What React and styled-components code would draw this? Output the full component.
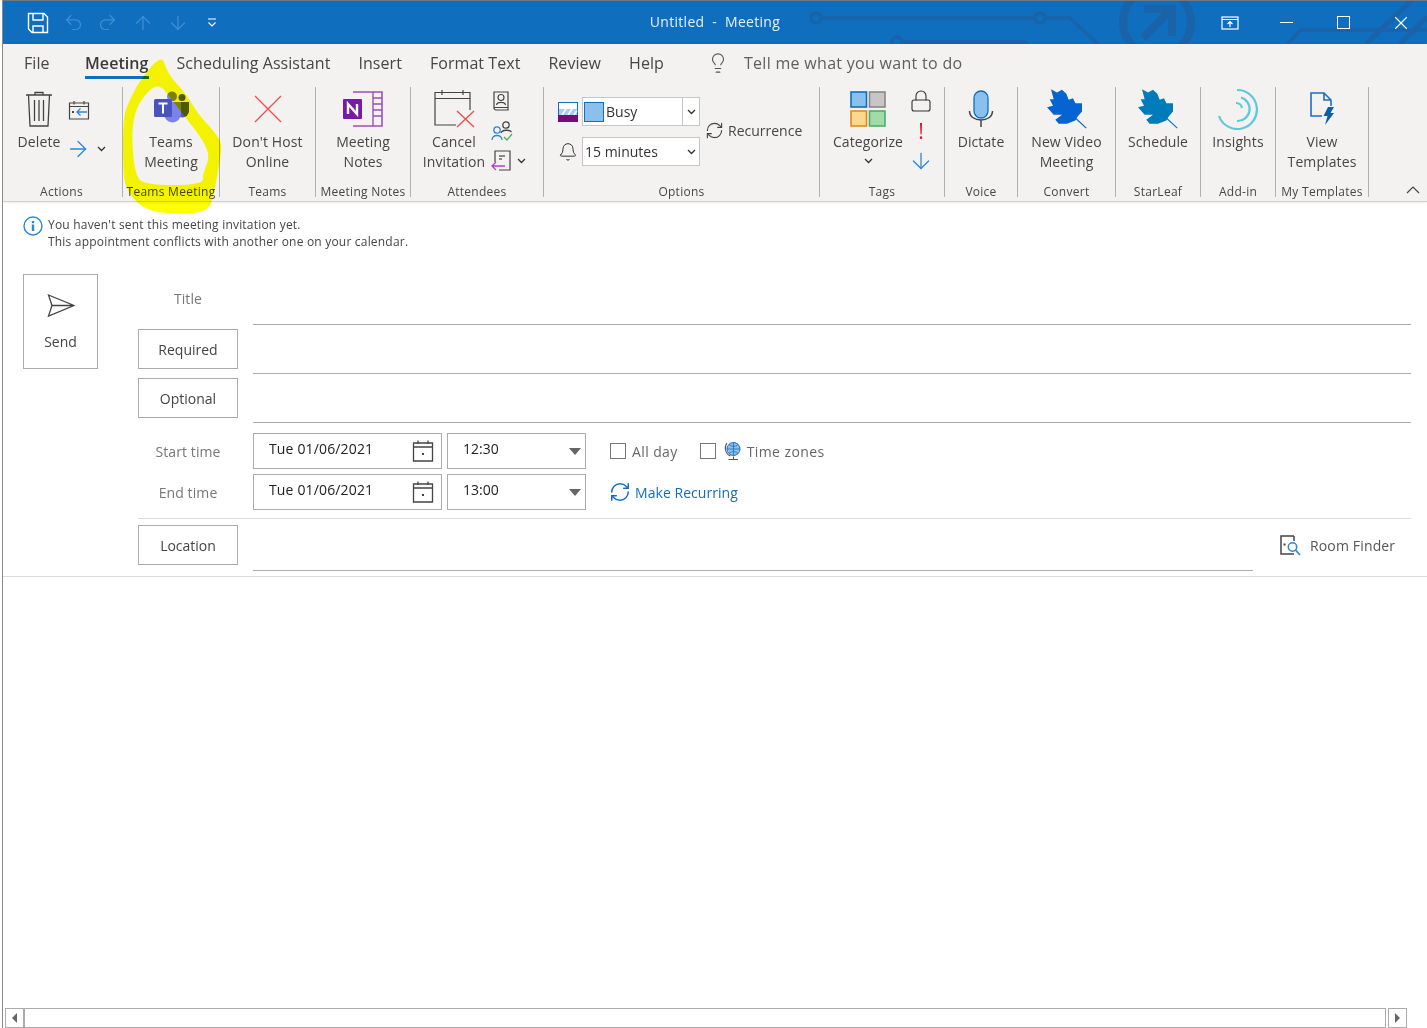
import styled, { createGlobalStyle } from "styled-components";
import { ArrowDown, ArrowRight, ArrowUp, Bell, Lightbulb, Lock, Redo2, RefreshCw, Undo2, X } from "lucide-react";

const BLUE = "#106ebe";
const UI_FONT = `"Open Sans", "Noto Sans", sans-serif`;

const GlobalStyle = createGlobalStyle`
  html, body {
    margin: 0;
    padding: 0;
    background: #fff;
  }
  body {
    font-family: ${UI_FONT};
    overflow: hidden;
  }
`;

const smooth = (pts) => {
  const mid = (a, b) => [(a[0] + b[0]) / 2, (a[1] + b[1]) / 2];
  const start = mid(pts[pts.length - 1], pts[0]);
  let d = `M${start[0]} ${start[1]}`;
  pts.forEach((p, i) => {
    const m = mid(p, pts[(i + 1) % pts.length]);
    d += `Q${p[0]} ${p[1]} ${m[0]} ${m[1]}`;
  });
  return d + "Z";
};

const outerMark = [[162,54],[167,73],[187,95],[197,113],[213,130],[222,143],[220,160],[214,193],[208,213],[163,214],[140,207],[125,187],[123,167],[123,120],[128,103],[140,80]];
const innerMark = [[158,82],[140,100],[133,120],[132,143],[135,173],[143,185],[203,185],[203,173],[210,157],[203,140],[186,118],[172,100]];

function App() {
  return (
    <Page>
      <GlobalStyle />
      <TopEdge />
      <TitleBar>
        <Watermark width="1427" height="44" viewBox="0 0 1427 44" fill="none" stroke="#1a63a8">
          <g strokeWidth="3.5">
            <circle cx="816" cy="18" r="5" />
            <path d="M821 18H1035M1045 18H1070L1098 44" />
            <circle cx="1040" cy="18" r="5" />
            <circle cx="897" cy="42" r="5" />
            <path d="M902 42H1025L1030 46" />
            <path d="M1287 44L1301 30H1427" />
          </g>
          <g strokeWidth="8">
            <circle cx="1157" cy="22" r="34" />
            <path d="M1143 38L1170 11M1144 9H1172V36" />
            <path d="M1366 44L1412 0M1400 44L1427 17" strokeWidth="5" />
          </g>
        </Watermark>
        <Qat>
          <SaveIcon />
          <DimIcon><Undo2 size={21} strokeWidth={1.4} /></DimIcon>
          <DimIcon><Redo2 size={21} strokeWidth={1.4} /></DimIcon>
          <DimIcon><ArrowUp size={22} strokeWidth={1.4} /></DimIcon>
          <DimIcon><ArrowDown size={22} strokeWidth={1.4} /></DimIcon>
          <CustomizeIcon />
        </Qat>
        <WindowTitle>{"Untitled  -  Meeting"}</WindowTitle>
        <WinControls>
          <RibbonDisplayIcon />
          <WinButton><MinLine /></WinButton>
          <WinButton><MaxBox /></WinButton>
          <WinButton><X size={22} strokeWidth={1.2} color="#fff" /></WinButton>
        </WinControls>
      </TitleBar>

      <Ribbon>
        <TabRow>
          <Tab $first>File</Tab>
          <Tab $active>Meeting</Tab>
          <Tab>Scheduling Assistant</Tab>
          <Tab>Insert</Tab>
          <Tab>Format Text</Tab>
          <Tab>Review</Tab>
          <Tab>Help</Tab>
          <TellMe>
            <Lightbulb size={22} strokeWidth={1.2} color="#555" />
            <span>Tell me what you want to do</span>
          </TellMe>
        </TabRow>

        <Groups>
          <Group width={120} label="Actions" labelShift={-1}>
            <ActionsBody>
              <BigButton $width={50}>
                <IconSlot><TrashIcon /></IconSlot>
                Delete
              </BigButton>
              <ActionsSide>
                <CalendarBackIcon />
                <ForwardRow $gap={6} $shift={-3}>
                  <ArrowRight size={26} strokeWidth={1.2} color="#2b88d8" />
                  <Chevron />
                </ForwardRow>
              </ActionsSide>
            </ActionsBody>
          </Group>
          <Group width={97} label="Teams Meeting">
            <BigButton>
              <IconSlot><TeamsIcon /></IconSlot>
              Teams
              <br />
              Meeting
            </BigButton>
          </Group>
          <Group width={96} label="Teams">
            <BigButton>
              <IconSlot><CrossIcon size={32} /></IconSlot>
              Don't Host
              <br />
              Online
            </BigButton>
          </Group>
          <Group width={95} label="Meeting Notes">
            <BigButton>
              <IconSlot><OneNoteIcon /></IconSlot>
              Meeting
              <br />
              Notes
            </BigButton>
          </Group>
          <Group width={133} label="Attendees">
            <AttendeesBody>
              <BigButton $width={66}>
                <IconSlot><CancelInviteIcon /></IconSlot>
                Cancel
                <br />
                Invitation
              </BigButton>
              <SideIcons>
                <AddressIcon />
                <PeopleCheckIcon />
                <ForwardRow $gap={6}>
                  <ResponseIcon />
                  <Chevron />
                </ForwardRow>
              </SideIcons>
            </AttendeesBody>
          </Group>
          <Group width={276} label="Options">
            <OptionsBody>
              <OptionRows>
                <OptionRow>
                  <BusyIcon />
                  <RibbonSelect>
                    <Swatch />
                    <SelectText>Busy</SelectText>
                    <SelectDrop $divided><Chevron /></SelectDrop>
                  </RibbonSelect>
                </OptionRow>
                <OptionRow>
                  <BellSlot><Bell size={26} strokeWidth={1.2} color="#333" /></BellSlot>
                  <RibbonSelect>
                    <SelectText>15 minutes</SelectText>
                    <SelectDrop><Chevron /></SelectDrop>
                  </RibbonSelect>
                </OptionRow>
              </OptionRows>
              <Recurrence>
                <RefreshCw size={19} strokeWidth={1.4} color="#444" />
                Recurrence
              </Recurrence>
            </OptionsBody>
          </Group>
          <Group width={125} label="Tags">
            <TagsBody>
              <BigButton $width={78}>
                <IconSlot><CategorizeIcon /></IconSlot>
                Categorize
                <ChevronLine><Chevron /></ChevronLine>
              </BigButton>
              <TagIcons>
                <Lock size={24} strokeWidth={1.1} color="#333" />
                <Urgent>!</Urgent>
                <ArrowDown size={26} strokeWidth={1.2} color="#2b88d8" />
              </TagIcons>
            </TagsBody>
          </Group>
          <Group width={73} label="Voice">
            <BigButton>
              <IconSlot><MicIcon /></IconSlot>
              Dictate
            </BigButton>
          </Group>
          <Group width={98} label="Convert">
            <BigButton>
              <IconSlot><LeafIcon color="#0564d2" /></IconSlot>
              New Video
              <br />
              Meeting
            </BigButton>
          </Group>
          <Group width={85} label="StarLeaf">
            <BigButton>
              <IconSlot><LeafIcon color="#007cba" /></IconSlot>
              Schedule
            </BigButton>
          </Group>
          <Group width={75} label="Add-in">
            <BigButton>
              <IconSlot><InsightsIcon /></IconSlot>
              Insights
            </BigButton>
          </Group>
          <Group width={93} label="My Templates">
            <BigButton>
              <IconSlot><TemplatesIcon /></IconSlot>
              View
              <br />
              Templates
            </BigButton>
          </Group>
          <Collapse>
            <svg width="14" height="8" viewBox="0 0 14 8" fill="none" stroke="#444" strokeWidth="1.2">
              <path d="M1 7L7 1L13 7" />
            </svg>
          </Collapse>
        </Groups>
      </Ribbon>

      <Notice>
        <InfoIcon />
        <div>
          <div>You haven't sent this meeting invitation yet.</div>
          <div>This appointment conflicts with another one on your calendar.</div>
        </div>
      </Notice>

      <Form>
        <SendButton>
          <SendIcon />
          Send
        </SendButton>
        <Fields>
          <TitleRow>
            <FieldLabel>Title</FieldLabel>
            <Line />
          </TitleRow>
          <AddressRow>
            <FieldButton>Required</FieldButton>
            <Line />
          </AddressRow>
          <AddressRow>
            <FieldButton>Optional</FieldButton>
            <Line />
          </AddressRow>
          <TimeRows>
            <TimeRow>
              <FieldLabel>Start time</FieldLabel>
              <DateBox>
                Tue 01/06/2021
                <CalendarSlot><CalendarIcon /></CalendarSlot>
              </DateBox>
              <TimeBox>
                12:30
                <Caret />
              </TimeBox>
              <Extras>
                <Check />
                <CheckLabel>All day</CheckLabel>
                <Check $gap />
                <GlobeIcon />
                <CheckLabel>Time zones</CheckLabel>
              </Extras>
            </TimeRow>
            <TimeRow>
              <FieldLabel>End time</FieldLabel>
              <DateBox>
                Tue 01/06/2021
                <CalendarSlot><CalendarIcon /></CalendarSlot>
              </DateBox>
              <TimeBox>
                13:00
                <Caret />
              </TimeBox>
              <Extras>
                <RefreshCw size={22} strokeWidth={1.6} color={BLUE} />
                <RecurringLink>Make Recurring</RecurringLink>
              </Extras>
            </TimeRow>
          </TimeRows>
          <LocationRow>
            <FieldButton>Location</FieldButton>
            <LocationLine />
            <RoomFinder>
              <RoomFinderIcon />
              Room Finder
            </RoomFinder>
          </LocationRow>
        </Fields>
      </Form>

      <ScrollBar>
        <ScrollButton $left><ScrollArrow $left /></ScrollButton>
        <ScrollTrack />
        <ScrollButton><ScrollArrow /></ScrollButton>
      </ScrollBar>

      <Highlight width="1427" height="230" viewBox="0 0 1427 230">
        <path d={smooth(outerMark) + smooth(innerMark)} fill="#ffff00" fillRule="evenodd" />
      </Highlight>
    </Page>
  );
}

export default App;

function Group({ width, label, labelShift = 0, children }) {
  return (
    <GroupBox $width={width}>
      <GroupBody>{children}</GroupBody>
      <GroupLabel $shift={labelShift}>{label}</GroupLabel>
    </GroupBox>
  );
}

function Chevron() {
  return (
    <svg width="9" height="6" viewBox="0 0 9 6" fill="none" stroke="#333" strokeWidth="1.3">
      <path d="M1 1L4.5 4.5L8 1" />
    </svg>
  );
}

function SaveIcon() {
  return (
    <svg width="22" height="22" viewBox="0 0 22 22" fill="none" stroke="#fff" strokeWidth="1.4">
      <path d="M1.5 1.5H17L20.5 5V20.5H5L1.5 17Z" />
      <path d="M6 1.5V8H16V1.5M6 20.5V14H16V20.5" />
    </svg>
  );
}

function CustomizeIcon() {
  return (
    <CustomizeSvg width="12" height="12" viewBox="0 0 12 12" fill="none" stroke="#fff" strokeWidth="1.2">
      <path d="M2 2H10M2.5 5.5L6 9L9.5 5.5" />
    </CustomizeSvg>
  );
}

function RibbonDisplayIcon() {
  return (
    <WinButton>
      <svg width="18" height="14" viewBox="0 0 18 14" fill="none" stroke="#fff" strokeWidth="1.2">
        <rect x="1" y="1" width="16" height="12" />
        <path d="M1 3.5H17M9 11V5.5M6.5 8L9 5.5L11.5 8" />
      </svg>
    </WinButton>
  );
}

function TrashIcon() {
  return (
    <svg width="28" height="38" viewBox="0 0 28 38" fill="none" stroke="#444" strokeWidth="1.3">
      <path d="M1 5H27M10 5V2.5H18V5M3.5 5L5 36H23L24.5 5" />
      <path d="M9.5 10V31M14 10V31M18.5 10V31" />
    </svg>
  );
}

function CalendarBackIcon() {
  return (
    <svg width="22" height="20" viewBox="0 0 22 20" fill="none">
      <path d="M1.5 3H20.5V19H1.5ZM1.5 6.5H20.5M6 1V4.5M16 1V4.5" stroke="#444" strokeWidth="1.2" />
      <path d="M19 12H9M12.5 8.5L9 12L12.5 15.5" stroke="#2b88d8" strokeWidth="1.3" />
      <rect x="4" y="11" width="2" height="2" fill="#444" />
    </svg>
  );
}

function TeamsIcon() {
  return (
    <TeamsSvg width="38" height="34" viewBox="0 0 38 34">
      <circle cx="29" cy="7.5" r="3.5" fill="#5059c9" />
      <path d="M23 12H36V21A6.5 6.5 0 0 1 23 21Z" fill="#5059c9" />
      <circle cx="19" cy="6.5" r="5" fill="#7b83eb" />
      <path d="M11 12H28V24A8.5 8.5 0 0 1 11 24Z" fill="#7b83eb" />
      <rect x="1" y="9" width="18" height="18" rx="1.5" fill="#4b53bc" />
      <path d="M5.5 12.5H14.5V14.5H11V23.5H9V14.5H5.5Z" fill="#fff" />
    </TeamsSvg>
  );
}

function CrossIcon({ size }) {
  return (
    <svg width={size} height={size} viewBox="0 0 32 32" stroke="#ee4e4e" strokeWidth="1.3">
      <path d="M3 3L29 29M29 3L3 29" />
    </svg>
  );
}

function OneNoteIcon() {
  return (
    <svg width="42" height="36" viewBox="0 0 42 36" fill="none">
      <path d="M11 1H40V35H11" stroke="#9a52b8" strokeWidth="1.6" />
      <path d="M31 1V35M31 13H40M31 19H40M31 25H40M31 7H40" stroke="#9a52b8" strokeWidth="1.4" />
      <rect x="1" y="8" width="19" height="20" rx="1" fill="#7719aa" />
      <path d="M6 23V13L15 23V13" stroke="#fff" strokeWidth="2.4" />
    </svg>
  );
}

function CancelInviteIcon() {
  return (
    <CancelSvg width="42" height="38" viewBox="0 0 42 38" fill="none">
      <path d="M1 2.5H36V35H1ZM1 8.5H36M8 0V5M29 0V5" stroke="#444" strokeWidth="1.2" />
      <rect x="22" y="20" width="19" height="18" fill="#f3f2f1" />
      <path d="M23 21L40 37M40 21L23 37" stroke="#ee4e4e" strokeWidth="1.4" />
    </CancelSvg>
  );
}

function AddressIcon() {
  return (
    <svg width="16" height="20" viewBox="0 0 16 20" fill="none" stroke="#444" strokeWidth="1.2">
      <path d="M1 1H15V19H3A2 2 0 0 1 1 17ZM1 16.5H15" />
      <circle cx="8" cy="6.5" r="3" />
      <path d="M3.5 14C4 10.5 12 10.5 12.5 14" />
    </svg>
  );
}

function PeopleCheckIcon() {
  return (
    <svg width="22" height="21" viewBox="0 0 22 21" fill="none" strokeWidth="1.3">
      <circle cx="15" cy="5" r="3.2" stroke="#444" />
      <path d="M10 13C11 9.5 19 9.5 20.5 12" stroke="#444" />
      <circle cx="6" cy="10" r="3.2" stroke="#2b88d8" />
      <path d="M1 20C1 14 11 14 11 20" stroke="#2b88d8" />
      <path d="M13 17L16 20L21 14" stroke="#4caf50" />
    </svg>
  );
}

function ResponseIcon() {
  return (
    <svg width="20" height="21" viewBox="0 0 20 21" fill="none" strokeWidth="1.2">
      <path d="M4 12V1H19V20H8" stroke="#444" />
      <path d="M8 6H14M8 9H11" stroke="#666" strokeWidth="1.6" />
      <path d="M14 16H1M5 12L1 16L5 20" stroke="#b146c2" strokeWidth="1.3" />
    </svg>
  );
}

function BusyIcon() {
  return (
    <svg width="20" height="20" viewBox="0 0 20 20">
      <rect x="0.5" y="0.5" width="19" height="19" fill="#fff" stroke={BLUE} />
      <rect x="1" y="7" width="18" height="6" fill="#a9cdf0" />
      <path d="M4 13L8 7M10 13L14 7M16 13L19 8.5" stroke="#fff" strokeWidth="1.5" />
      <rect x="0" y="13" width="20" height="7" fill="#7a0a78" />
    </svg>
  );
}

function CategorizeIcon() {
  return (
    <svg width="36" height="36" viewBox="0 0 36 36" strokeWidth="1.6">
      <rect x="1" y="1" width="15.5" height="15" fill="#8bc0ec" stroke={BLUE} />
      <rect x="19.5" y="1" width="15.5" height="15" fill="#c8c6c4" stroke="#8a8886" />
      <rect x="1" y="20" width="15.5" height="15" fill="#f8d98e" stroke="#e38a1f" />
      <rect x="19.5" y="20" width="15.5" height="15" fill="#a0dba8" stroke="#4caf6a" />
    </svg>
  );
}

function MicIcon() {
  return (
    <svg width="26" height="38" viewBox="0 0 26 38" fill="none">
      <rect x="6" y="1" width="14" height="27" rx="7" fill="#8bc0ec" stroke={BLUE} strokeWidth="1.3" />
      <path d="M1.5 21C1.5 33 24.5 33 24.5 21M13 30V37" stroke="#444" strokeWidth="1.5" />
    </svg>
  );
}

function LeafIcon({ color }) {
  return (
    <svg width="40" height="41" viewBox="0 265 120 122">
      <path transform="translate(-300 0)" d="M312 268L330 278L345 270L358 282L365 300L378 295L385 310L405 310L405 335L392 350L385 362L360 372L335 372L325 360L345 345L320 345L300 322L318 318L308 298L320 298Z" fill={color} />
      <path transform="translate(-300 0)" d="M380 350L418 385" stroke={color} strokeWidth="3.5" />
    </svg>
  );
}

function InsightsIcon() {
  return (
    <svg width="42" height="42" viewBox="0 0 42 42" fill="none" stroke="#5bc9dc" strokeWidth="2.2">
      <path d="M20 2A19.5 19.5 0 1 1 2 28" />
      <path d="M24 9.5A12 12 0 0 1 20 33" />
      <path d="M19 15A6 6 0 0 1 25 20" />
    </svg>
  );
}

function TemplatesIcon() {
  return (
    <svg width="26" height="34" viewBox="0 0 26 34" fill="none">
      <path d="M13 24H2V1H15L22 8V14M15 1V8H22" stroke="#1f6fc0" strokeWidth="1.6" />
      <path d="M19 15H25L21.5 21H25L16 33L18.5 24H14.5Z" fill="#0b5fa8" />
    </svg>
  );
}

function InfoIcon() {
  return (
    <svg width="20" height="20" viewBox="0 0 20 20" fill="none">
      <circle cx="10" cy="10" r="9" stroke="#2b88d8" strokeWidth="1.4" />
      <rect x="8.8" y="8.5" width="2.4" height="6.5" fill="#2b88d8" />
      <rect x="8.8" y="5" width="2.4" height="2.2" fill="#2b88d8" />
    </svg>
  );
}

function SendIcon() {
  return (
    <svg width="28" height="24" viewBox="0 0 28 24" fill="none" stroke="#444" strokeWidth="1.3">
      <path d="M1.5 1L27 11.5L1.5 22L5 11.5ZM5 11.5H27" />
    </svg>
  );
}

function CalendarIcon() {
  return (
    <svg width="22" height="22" viewBox="0 0 22 22" fill="none" stroke="#444" strokeWidth="1.3">
      <path d="M1.5 3H20.5V21H1.5ZM1.5 7H20.5M6 0.5V4M16 0.5V4" />
      <rect x="10" y="13" width="2" height="2" fill="#444" stroke="none" />
    </svg>
  );
}

function GlobeIcon() {
  return (
    <GlobeSvg width="18" height="20" viewBox="0 0 18 20" fill="none">
      <circle cx="9.5" cy="8" r="6.5" fill="#8bc0ec" stroke="#1f6fc0" />
      <path d="M3 8H16M9.5 1.5V14.5M5 3.5C8 6 11 6 14 3.5M5 12.5C8 10 11 10 14 12.5" stroke="#1f6fc0" strokeWidth="0.8" />
      <path d="M3 2C0 6 1 13 6.5 15M9.5 15.5V18M4.5 18.5H14" stroke="#555" strokeWidth="1.1" />
    </GlobeSvg>
  );
}

function RoomFinderIcon() {
  return (
    <svg width="21" height="21" viewBox="0 0 21 21" fill="none">
      <path d="M14 1H1V19H14" stroke="#444" strokeWidth="1.5" />
      <path d="M14 1V6" stroke="#444" strokeWidth="1.5" />
      <rect x="3.5" y="8.5" width="2" height="2" fill="#444" />
      <circle cx="12.5" cy="12" r="4.2" stroke="#2b88d8" strokeWidth="1.5" fill="#fff" />
      <path d="M15.5 15L20 20" stroke="#2b88d8" strokeWidth="1.7" />
    </svg>
  );
}

const CustomizeSvg = styled.svg`
  margin-left: 3px;
`;

const TeamsSvg = styled.svg`
  transform: translate(1px, -2px);
`;

const CancelSvg = styled.svg`
  margin-left: 2px;
`;

const GlobeSvg = styled.svg`
  margin-right: -2px;
`;

const Page = styled.div`
  position: relative;
  display: flex;
  flex-direction: column;
  box-sizing: border-box;
  width: 1425px;
  height: 1028px;
  margin-left: 2px;
  border-left: 1px solid #8a8a8a;
  background: #fff;
  color: #444;
  overflow: hidden;
`;

const TopEdge = styled.div`
  height: 1px;
  background: #6d7a86;
`;

const TitleBar = styled.div`
  position: relative;
  display: flex;
  align-items: center;
  justify-content: space-between;
  height: 43px;
  background: ${BLUE};
  overflow: hidden;
`;

const Watermark = styled.svg`
  position: absolute;
  left: -3px;
  top: -1px;
`;

const Qat = styled.div`
  position: relative;
  display: flex;
  align-items: center;
  width: 220px;
  padding-left: 24px;
  gap: 13.5px;
`;

const DimIcon = styled.span`
  display: flex;
  color: #3f8fd4;
`;

const WindowTitle = styled.div`
  position: absolute;
  left: 0;
  right: 0;
  padding-bottom: 2px;
  text-align: center;
  color: #e6f0fa;
  font-size: 14px;
  letter-spacing: 0.3px;
  white-space: pre;
`;

const WinControls = styled.div`
  position: relative;
  display: flex;
  align-items: center;
  margin-right: -2px;
`;

const WinButton = styled.div`
  display: flex;
  align-items: center;
  justify-content: center;
  width: 57px;
  height: 43px;
`;

const MinLine = styled.div`
  width: 13px;
  height: 1px;
  background: #fff;
`;

const MaxBox = styled.div`
  width: 11px;
  height: 11px;
  border: 1px solid #fff;
`;

const Ribbon = styled.div`
  position: relative;
  height: 157px;
  background: #f3f2f1;
  border-bottom: 1px solid #d2d0ce;
  box-shadow: 0 1px 3px rgba(0, 0, 0, 0.08);
`;

const TabRow = styled.div`
  display: flex;
  align-items: center;
  gap: 28px;
  height: 40px;
  padding: 0 0 2px 21px;
  box-sizing: border-box;
`;

const Tab = styled.div`
  position: relative;
  font-size: 16px;
  letter-spacing: 0.06px;
  color: ${(p) => (p.$active ? "#3b3a39" : "#484644")};
  font-weight: ${(p) => (p.$active ? 600 : 400)};
  margin-right: ${(p) => (p.$first ? "7.5px" : 0)};
  &::after {
    content: "";
    display: ${(p) => (p.$active ? "block" : "none")};
    position: absolute;
    left: 0;
    right: -1px;
    bottom: -5px;
    height: 3px;
    background: ${BLUE};
  }
`;

const TellMe = styled.div`
  display: flex;
  align-items: center;
  gap: 15px;
  margin-left: 15px;
  font-size: 16px;
  letter-spacing: 0.3px;
  color: #605e5c;
`;

const Groups = styled.div`
  display: flex;
  height: 110px;
  margin-top: 3px;
`;

const GroupBox = styled.div`
  display: flex;
  flex-direction: column;
  box-sizing: border-box;
  width: ${(p) => p.$width}px;
  height: 110px;
  border-right: 1px solid #b3b0ad;
`;

const GroupBody = styled.div`
  display: flex;
  justify-content: center;
  flex: 1;
  min-height: 0;
`;

const GroupLabel = styled.div`
  height: 16px;
  margin-bottom: -3px;
  line-height: 16px;
  text-align: center;
  font-size: 12px;
  letter-spacing: 0.27px;
  color: #484644;
  white-space: nowrap;
  transform: translateX(${(p) => p.$shift}px);
`;

const BigButton = styled.div`
  display: flex;
  flex-direction: column;
  align-items: center;
  width: ${(p) => (p.$width ? `${p.$width}px` : "auto")};
  font-size: 14px;
  letter-spacing: 0.1px;
  line-height: 20px;
  text-align: center;
  color: #484644;
  white-space: nowrap;
  & br {
    display: block;
  }
`;

const IconSlot = styled.div`
  display: flex;
  align-items: center;
  justify-content: center;
  box-sizing: border-box;
  height: 45px;
  padding-bottom: 2px;
`;

const ActionsBody = styled.div`
  display: flex;
  width: 100%;
  padding-left: 11px;
`;

const ActionsSide = styled.div`
  display: flex;
  flex-direction: column;
  align-items: flex-start;
  gap: 16px;
  margin-left: 4px;
  padding-top: 13px;
`;

const ForwardRow = styled.div`
  display: flex;
  align-items: center;
  gap: ${(p) => p.$gap}px;
  margin-left: ${(p) => p.$shift || 0}px;
`;

const AttendeesBody = styled.div`
  display: flex;
  width: 100%;
  padding-left: 10px;
`;

const SideIcons = styled.div`
  display: flex;
  flex-direction: column;
  gap: 9px;
  padding-top: 4px;
  padding-left: 4px;
  & > svg:first-child {
    margin-left: 2px;
  }
`;

const OptionsBody = styled.div`
  display: flex;
  width: 100%;
  padding-left: 14px;
`;

const OptionRows = styled.div`
  display: flex;
  flex-direction: column;
  gap: 11px;
  padding-top: 10px;
`;

const OptionRow = styled.div`
  display: flex;
  align-items: center;
  gap: 4px;
`;

const BellSlot = styled.div`
  display: flex;
  justify-content: center;
  width: 20px;
`;

const RibbonSelect = styled.div`
  display: flex;
  align-items: center;
  box-sizing: border-box;
  width: 118px;
  height: 29px;
  background: #fff;
  border: 1px solid #c8c6c4;
  font-size: 14px;
  color: #333;
`;

const Swatch = styled.div`
  box-sizing: border-box;
  flex: none;
  width: 20px;
  height: 20px;
  margin-left: 1px;
  background: #8bc0ec;
  border: 1px solid ${BLUE};
`;

const SelectText = styled.div`
  flex: 1;
  padding-left: 2px;
`;

const SelectDrop = styled.div`
  display: flex;
  align-items: center;
  justify-content: center;
  width: 16px;
  height: 100%;
  border-left: ${(p) => (p.$divided ? "1px solid #c8c6c4" : "none")};
`;

const Recurrence = styled.div`
  display: flex;
  align-items: center;
  align-self: flex-start;
  gap: 4px;
  margin-top: 34px;
  margin-left: 5px;
  font-size: 14px;
  color: #484644;
  white-space: nowrap;
`;

const TagsBody = styled.div`
  display: flex;
  width: 100%;
  padding-left: 9px;
`;

const ChevronLine = styled.div`
  display: flex;
  justify-content: center;
  margin-top: 6px;
`;

const TagIcons = styled.div`
  display: flex;
  flex-direction: column;
  align-items: center;
  margin-left: 2px;
  padding-top: 2px;
  width: 24px;
`;

const Urgent = styled.div`
  height: 30px;
  margin: 3px 0 2px;
  line-height: 30px;
  color: #e81123;
  font-size: 21px;
`;

const Collapse = styled.div`
  align-self: flex-end;
  margin-left: 37px;
  margin-bottom: -2px;
`;

const Notice = styled.div`
  display: flex;
  gap: 5px;
  padding: 14px 0 0 20px;
  font-size: 12px;
  letter-spacing: 0.2px;
  line-height: 17px;
  color: #444;
`;

const Form = styled.div`
  display: flex;
  align-items: flex-start;
  gap: 40px;
  margin-top: 24px;
  padding: 0 16px 5px 20px;
  border-bottom: 1px solid #dcdcdc;
`;

const SendButton = styled.div`
  display: flex;
  flex-direction: column;
  align-items: center;
  justify-content: center;
  gap: 14px;
  box-sizing: border-box;
  width: 75px;
  height: 95px;
  padding-top: 2px;
  border: 1px solid #ababab;
  font-size: 14px;
  color: #444;
`;

const Fields = styled.div`
  flex: 1;
`;

const FieldLabel = styled.div`
  text-align: center;
  font-size: 14px;
  letter-spacing: 0.1px;
  color: #777;
`;

const Line = styled.div`
  border-bottom: 1px solid #ababab;
`;

const TitleRow = styled.div`
  display: grid;
  grid-template-columns: 100px 1fr;
  column-gap: 15px;
  align-items: stretch;
  height: 51px;
  & > ${FieldLabel} {
    line-height: 50px;
  }
`;

const AddressRow = styled.div`
  display: grid;
  grid-template-columns: 100px 1fr;
  column-gap: 15px;
  height: 49px;
`;

const FieldButton = styled.div`
  display: flex;
  align-items: center;
  justify-content: center;
  box-sizing: border-box;
  height: 40px;
  margin-top: 4px;
  border: 1px solid #ababab;
  font-size: 14px;
  color: #444;
`;

const TimeRows = styled.div`
  display: flex;
  flex-direction: column;
  gap: 5px;
  margin-top: 10px;
  padding-bottom: 8px;
  border-bottom: 1px solid #dcdcdc;
`;

const TimeRow = styled.div`
  display: grid;
  grid-template-columns: 100px 189px 139px 1fr;
  align-items: center;
  height: 36px;
  & > ${FieldLabel} {
    margin-right: 15px;
    width: 100px;
  }
`;

const DateBox = styled.div`
  display: flex;
  align-items: center;
  justify-content: space-between;
  box-sizing: border-box;
  height: 36px;
  margin-left: 15px;
  width: 189px;
  padding: 0 0 6px 15px;
  border: 1px solid #ababab;
  font-size: 14px;
  letter-spacing: 0.15px;
  color: #222;
`;

const CalendarSlot = styled.div`
  display: flex;
  align-items: center;
  margin: 0 7px -6px 0;
`;

const TimeBox = styled.div`
  display: flex;
  align-items: center;
  justify-content: space-between;
  box-sizing: border-box;
  height: 36px;
  margin-left: 20px;
  width: 139px;
  padding: 0 0 6px 15px;
  border: 1px solid #ababab;
  font-size: 14px;
  color: #222;
`;

const Caret = styled.div`
  width: 0;
  height: 0;
  margin: 6px 4px 0 0;
  border-left: 6px solid transparent;
  border-right: 6px solid transparent;
  border-top: 7px solid #666;
`;

const Extras = styled.div`
  display: flex;
  align-items: center;
  margin-left: 44px;
  font-size: 14px;
  color: #666;
  & > svg:first-child {
    margin-right: 4px;
    margin-left: -1px;
  }
`;

const Check = styled.div`
  box-sizing: border-box;
  width: 16px;
  height: 16px;
  margin-left: ${(p) => (p.$gap ? "22px" : 0)};
  margin-right: ${(p) => (p.$gap ? "8px" : "6px")};
  border: 1px solid #777;
`;

const CheckLabel = styled.div`
  letter-spacing: 0.4px;
  color: #666;
  svg + & {
    margin-left: 7px;
  }
`;

const RecurringLink = styled.div`
  letter-spacing: 0.05px;
  color: ${BLUE};
`;

const LocationRow = styled.div`
  display: grid;
  grid-template-columns: 100px 1000px 1fr;
  column-gap: 15px;
  height: 52px;
  padding-top: 2px;
  box-sizing: border-box;
`;

const LocationLine = styled.div`
  height: 50px;
  border-bottom: 1px solid #ababab;
  box-sizing: border-box;
`;

const RoomFinder = styled.div`
  display: flex;
  align-items: center;
  gap: 9px;
  height: 40px;
  margin: 4px 0 0 12px;
  font-size: 14px;
  letter-spacing: 0.15px;
  color: #555;
  white-space: nowrap;
`;

const ScrollBar = styled.div`
  display: flex;
  box-sizing: border-box;
  height: 20px;
  margin-top: auto;
  margin-bottom: 0.5px;
  margin-left: 2px;
  margin-right: 20px;
`;

const ScrollButton = styled.div`
  display: flex;
  align-items: center;
  justify-content: center;
  box-sizing: border-box;
  width: ${(p) => (p.$left ? "18px" : "19px")};
  margin-left: ${(p) => (p.$left ? 0 : "2px")};
  border: 1px solid #ababab;
  border-right-width: ${(p) => (p.$left ? 0 : "1px")};
`;

const ScrollTrack = styled.div`
  flex: 1;
  border: 1px solid #ababab;
  border-left-width: 2px;
`;

const ScrollArrow = styled.div`
  width: 0;
  height: 0;
  border-top: 5px solid transparent;
  border-bottom: 5px solid transparent;
  border-left: ${(p) => (p.$left ? "none" : "5px solid #666")};
  border-right: ${(p) => (p.$left ? "5px solid #666" : "none")};
`;

const Highlight = styled.svg`
  position: absolute;
  left: -3px;
  top: 0;
  mix-blend-mode: multiply;
  pointer-events: none;
`;
